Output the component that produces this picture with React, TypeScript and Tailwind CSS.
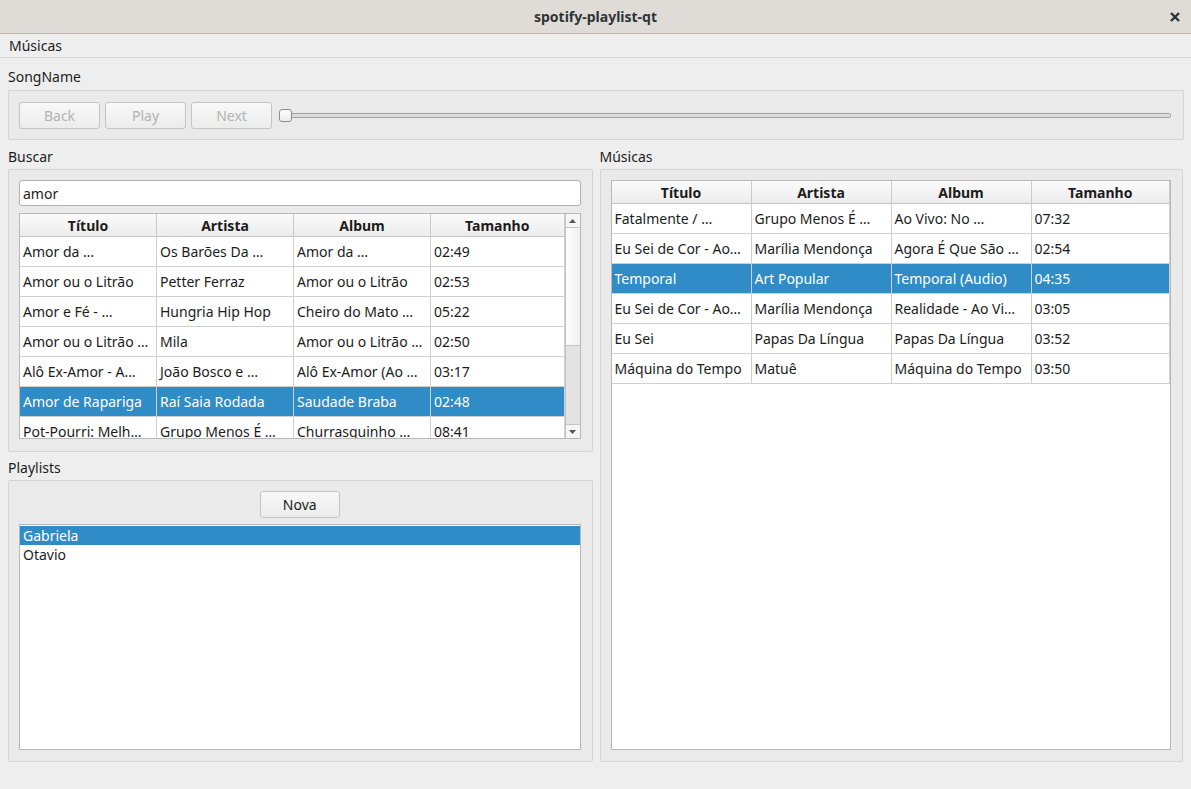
import type { ReactNode } from "react";

type Row = [string, string, string, string];

const searchRows: Row[] = [
  ["Amor da …", "Os Barões Da …", "Amor da …", "02:49"],
  ["Amor ou o Litrão", "Petter Ferraz", "Amor ou o Litrão", "02:53"],
  ["Amor e Fé - …", "Hungria Hip Hop", "Cheiro do Mato …", "05:22"],
  ["Amor ou o Litrão …", "Mila", "Amor ou o Litrão …", "02:50"],
  ["Alô Ex-Amor - A…", "João Bosco e …", "Alô Ex-Amor (Ao …", "03:17"],
  ["Amor de Rapariga", "Raí Saia Rodada", "Saudade Braba", "02:48"],
  ["Pot-Pourri: Melh…", "Grupo Menos É …", "Churrasquinho …", "08:41"],
];

const playlistRows: Row[] = [
  ["Fatalmente / …", "Grupo Menos É …", "Ao Vivo: No …", "07:32"],
  ["Eu Sei de Cor - Ao…", "Marília Mendonça", "Agora É Que São …", "02:54"],
  ["Temporal", "Art Popular", "Temporal (Audio)", "04:35"],
  ["Eu Sei de Cor - Ao…", "Marília Mendonça", "Realidade - Ao Vi…", "03:05"],
  ["Eu Sei", "Papas Da Língua", "Papas Da Língua", "03:52"],
  ["Máquina do Tempo", "Matuê", "Máquina do Tempo", "03:50"],
];

const headers = ["Título", "Artista", "Album", "Tamanho"];

function GroupBox({ className, children }: { className: string; children: ReactNode }) {
  return (
    <div className={`rounded-[2px] border border-[#d4d4d4] bg-[#eaeaea] ${className}`}>{children}</div>
  );
}

function Button({ label, disabled, width = "w-[81px]" }: { label: string; disabled?: boolean; width?: string }) {
  return (
    <div
      className={`flex h-[27px] ${width} shrink-0 items-center justify-center rounded-[3px] border border-[#c4c4c4] bg-gradient-to-b from-[#f8f8f8] to-[#ececec] ${
        disabled ? "text-[#b2b2b2]" : "text-[#1a1a1a]"
      }`}
    >
      {label}
    </div>
  );
}

function Table({ rows, selected, cols, scroll }: { rows: Row[]; selected: number; cols: string; scroll?: boolean }) {
  return (
    <div className="flex min-h-0 flex-1 overflow-hidden border border-[#b8b8b8] bg-white">
      <div className="flex min-w-0 flex-1 flex-col overflow-hidden">
        <div className={`grid h-[23px] shrink-0 ${cols} border-b border-[#c4c4c4] bg-gradient-to-b from-[#fbfbfb] to-[#ececec] font-bold`}>
          {headers.map((h) => (
            <div key={h} className="flex items-center justify-center border-r border-[#cacaca] pt-[1px] leading-none">
              {h}
            </div>
          ))}
        </div>
        {rows.map((r, i) => (
          <div
            key={i}
            className={`grid h-[30px] shrink-0 ${cols} border-b border-[#d0d0d0] ${
              i === selected ? "bg-[#308cc6] text-white" : ""
            }`}
          >
            {r.map((c, j) => (
              <div key={j} className="flex items-center overflow-hidden whitespace-nowrap border-r border-[#d0d0d0] pl-[3px]">
                {c}
              </div>
            ))}
          </div>
        ))}
      </div>
      {scroll && (
        <div className="flex w-[15px] shrink-0 flex-col border-l border-[#c4c4c4] bg-[#e3e3e3]">
          <div className="flex h-[14px] items-center justify-center border-b border-[#c4c4c4] bg-[#f6f6f6]">
            <svg width="7" height="4" viewBox="0 0 7 4">
              <path d="M0 4 L3.5 0 L7 4 Z" fill="#555" />
            </svg>
          </div>
          <div className="h-[118px] border-b border-[#c4c4c4] bg-gradient-to-r from-[#fdfdfd] to-[#f0f0f0]" />
          <div className="flex-1" />
          <div className="flex h-[14px] items-center justify-center border-t border-[#c4c4c4] bg-[#f6f6f6]">
            <svg width="7" height="4" viewBox="0 0 7 4">
              <path d="M0 0 L3.5 4 L7 0 Z" fill="#555" />
            </svg>
          </div>
        </div>
      )}
    </div>
  );
}

export default function App() {
  return (
    <div className="flex h-[789px] w-[1191px] flex-col overflow-hidden bg-[#eeeeee] font-['Noto_Sans',sans-serif] text-[14px] text-[#1c1c1c]">
      {/* window title */}
      <div className="relative flex h-[34px] shrink-0 items-center justify-center border-b border-[#b9b6b2] bg-[#dfdcd8]">
        <span className="text-[14px] font-bold text-[#2e3436]">spotify-playlist-qt</span>
        <svg className="absolute right-[11px] top-[12px]" width="10" height="10" viewBox="0 0 10 10">
          <path d="M1 1 L9 9 M9 1 L1 9" stroke="#2e3436" strokeWidth="2.4" />
        </svg>
      </div>

      {/* menu bar */}
      <div className="flex h-[24px] shrink-0 items-center border-b border-[#d6d6d6] pl-[9px]">Músicas</div>

      <div className="flex flex-1 flex-col px-[8px]">
        <div className="h-[32px] pt-[9px] leading-[20px]">SongName</div>
        <GroupBox className="flex h-[50px] w-[1176px] items-center gap-[5px] pl-[10px] pr-[12px]">
          <Button label="Back" disabled />
          <Button label="Play" disabled />
          <Button label="Next" disabled />
          <div className="ml-[2px] flex flex-1 items-center">
            <div className="h-[13px] w-[13px] shrink-0 rounded-[3px] border border-[#8c8c8c] bg-gradient-to-b from-white to-[#ededed]" />
            <div className="h-[5px] flex-1 rounded-r-[2px] border border-l-0 border-[#a4a4a4] bg-[#dcdcdc]" />
          </div>
        </GroupBox>

        <div className="flex gap-[7px]">
          {/* left column */}
          <div className="flex w-[585px] flex-col">
            <div className="h-[29px] pt-[7px] leading-[20px]">Buscar</div>
            <GroupBox className="flex h-[283px] flex-col pb-[12px] pl-[10px] pr-[11px] pt-[10px]">
              <div className="flex h-[26px] shrink-0 items-center rounded-[3px] border border-[#b4b4b4] bg-white pl-[3px]">
                amor
              </div>
              <div className="mt-[7px] flex min-h-0 flex-1">
                <Table rows={searchRows} selected={5} cols="grid-cols-[137px_137px_137px_1fr]" scroll />
              </div>
            </GroupBox>
            <div className="h-[28px] pt-[6px] leading-[20px]">Playlists</div>
            <GroupBox className="flex h-[282px] flex-col pb-[11px] pl-[10px] pr-[11px] pt-[10px]">
              <div className="flex justify-center">
                <Button label="Nova" width="w-[80px]" />
              </div>
              <div className="mt-[6px] flex-1 border border-[#b8b8b8] bg-white pt-[1px]">
                <div className="flex h-[19px] items-center bg-[#308cc6] pl-[3px] text-white">Gabriela</div>
                <div className="flex h-[19px] items-center pl-[3px]">Otavio</div>
              </div>
            </GroupBox>
          </div>

          {/* right column */}
          <div className="flex w-[584px] flex-col">
            <div className="h-[29px] pt-[7px] leading-[20px]">Músicas</div>
            <GroupBox className="flex h-[593px] flex-col pb-[11px] pl-[10px] pr-[11px] pt-[10px]">
              <Table rows={playlistRows} selected={2} cols="grid-cols-[140px_140px_140px_1fr]" />
            </GroupBox>
          </div>
        </div>
      </div>
    </div>
  );
}
